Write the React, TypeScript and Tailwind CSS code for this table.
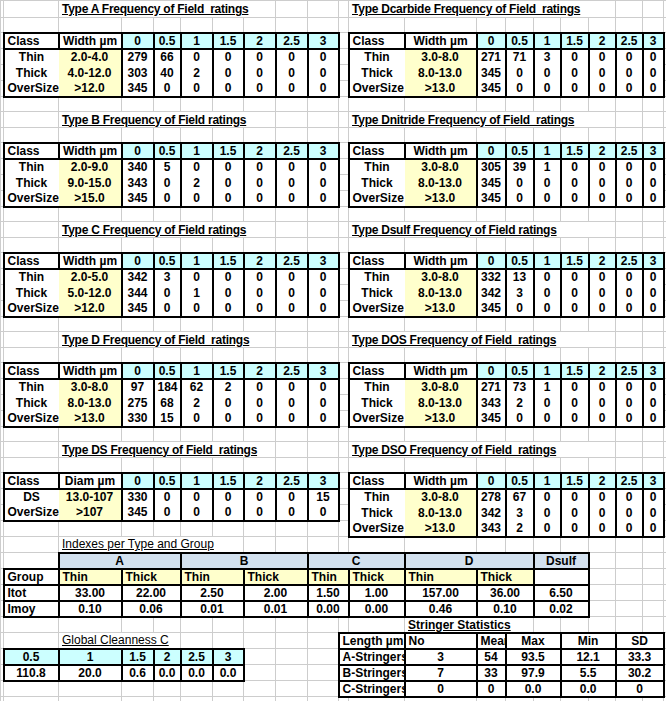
import React from 'react';

type Cell = { c: number; s?: number; t?: string; k?: string; b?: string; pre?: boolean };

const COLS = [
  'w-[3px]', 'w-[55px]', 'w-[63px]', 'w-[32px]', 'w-[27px]', 'w-[32px]', 'w-[31px]', 'w-[32px]', 'w-[32px]', 'w-[31px]',
  'w-[10px]', 'w-[56px]', 'w-[72px]', 'w-[29px]', 'w-[28px]', 'w-[27px]', 'w-[28px]', 'w-[27px]', 'w-[27px]', 'w-[21px]', 'w-[3px]',
];
const NC = COLS.length;

const H: number[] = [17, 15, 16, 16, 16, 16];
for (let i = 0; i < 4; i++) H.push(15, 16, 15, 16, 16, 16, 16);
for (let i = 0; i < 11; i++) H.push(16);
const HC: Record<number, string> = { 15: 'h-[15px]', 16: 'h-[16px]', 17: 'h-[17px]' };

const BT: Record<string, string> = { g: 'border-t border-t-[#cdcdcd]', K: 'border-t-2 border-t-black', k: 'border-t border-t-black', '0': 'border-t-0' };
const BR: Record<string, string> = { g: 'border-r border-r-[#cdcdcd]', K: 'border-r-2 border-r-black', k: 'border-r border-r-black', '0': 'border-r-0' };
const BB: Record<string, string> = { g: 'border-b border-b-[#cdcdcd]', K: 'border-b-2 border-b-black', k: 'border-b border-b-black', '0': 'border-b-0' };
const BL: Record<string, string> = { g: 'border-l border-l-[#cdcdcd]', K: 'border-l-2 border-l-black', k: 'border-l border-l-black', '0': 'border-l-0' };

const CYAN = 'bg-[#ccffff]';
const YEL = 'bg-[#ffffcc]';
const BLUE = 'bg-[#d3e1ef]';

const R: Cell[][] = H.map(() => []);

const titles: [number, string, string][] = [
  [0, 'Type A Frequency of Field  ratings', 'Type Dcarbide Frequency of Field  ratings'],
  [7, 'Type B Frequency of Field ratings', 'Type Dnitride Frequency of Field  ratings'],
  [14, 'Type C Frequency of Field ratings', 'Type Dsulf Frequency of Field ratings'],
  [21, 'Type D Frequency of Field  ratings', 'Type DOS Frequency of Field  ratings'],
  [28, 'Type DS Frequency of Field  ratings', 'Type DSO Frequency of Field  ratings'],
];
titles.forEach(([r, l, rt]) => {
  R[r].push({ c: 2, s: 6, t: l, k: 'text-left underline tracking-[-0.25px]', b: 'gggg', pre: true });
  R[r].push({ c: 11, s: 7, t: rt, k: 'text-left underline tracking-[-0.25px]', b: 'gggg', pre: true });
});

type FRow = [string, string, (number | string)[]];

function freq(row: number, side: 'L' | 'R', label: string, data: FRow[]) {
  const cc = side === 'L' ? 1 : 11;
  const wc = cc + 1;
  const vs = cc + 2;
  R[row].push({ c: cc, t: 'Class', k: 'text-left', b: 'KKKK' });
  R[row].push({ c: wc, t: label, k: 'text-center', b: 'KKKK' });
  ['0', '0.5', '1', '1.5', '2', '2.5', '3'].forEach((v, i) =>
    R[row].push({ c: vs + i, t: v, k: `text-center ${CYAN}`, b: 'KKKK' })
  );
  data.forEach(([cl, w, vals], j) => {
    const last = j === data.length - 1;
    const bt = last ? 'K' : '0';
    const r = row + 1 + j;
    R[r].push({ c: cc, t: cl, k: 'text-center', b: '00' + bt + 'K' });
    R[r].push({ c: wc, t: w, k: `text-center ${YEL}`, b: '0K' + bt + '0' });
    vals.forEach((v, i) => R[r].push({ c: vs + i, t: String(v), k: 'text-center', b: '0K' + bt + 'K' }));
  });
}

freq(2, 'L', 'Width µm', [
  ['Thin', '2.0-4.0', [279, 66, 0, 0, 0, 0, 0]],
  ['Thick', '4.0-12.0', [303, 40, 2, 0, 0, 0, 0]],
  ['OverSize', '>12.0', [345, 0, 0, 0, 0, 0, 0]],
]);
freq(2, 'R', 'Width µm', [
  ['Thin', '3.0-8.0', [271, 71, 3, 0, 0, 0, 0]],
  ['Thick', '8.0-13.0', [345, 0, 0, 0, 0, 0, 0]],
  ['OverSize', '>13.0', [345, 0, 0, 0, 0, 0, 0]],
]);
freq(9, 'L', 'Width µm', [
  ['Thin', '2.0-9.0', [340, 5, 0, 0, 0, 0, 0]],
  ['Thick', '9.0-15.0', [343, 0, 2, 0, 0, 0, 0]],
  ['OverSize', '>15.0', [345, 0, 0, 0, 0, 0, 0]],
]);
freq(9, 'R', 'Width µm', [
  ['Thin', '3.0-8.0', [305, 39, 1, 0, 0, 0, 0]],
  ['Thick', '8.0-13.0', [345, 0, 0, 0, 0, 0, 0]],
  ['OverSize', '>13.0', [345, 0, 0, 0, 0, 0, 0]],
]);
freq(16, 'L', 'Width µm', [
  ['Thin', '2.0-5.0', [342, 3, 0, 0, 0, 0, 0]],
  ['Thick', '5.0-12.0', [344, 0, 1, 0, 0, 0, 0]],
  ['OverSize', '>12.0', [345, 0, 0, 0, 0, 0, 0]],
]);
freq(16, 'R', 'Width µm', [
  ['Thin', '3.0-8.0', [332, 13, 0, 0, 0, 0, 0]],
  ['Thick', '8.0-13.0', [342, 3, 0, 0, 0, 0, 0]],
  ['OverSize', '>13.0', [345, 0, 0, 0, 0, 0, 0]],
]);
freq(23, 'L', 'Width µm', [
  ['Thin', '3.0-8.0', [97, 184, 62, 2, 0, 0, 0]],
  ['Thick', '8.0-13.0', [275, 68, 2, 0, 0, 0, 0]],
  ['OverSize', '>13.0', [330, 15, 0, 0, 0, 0, 0]],
]);
freq(23, 'R', 'Width µm', [
  ['Thin', '3.0-8.0', [271, 73, 1, 0, 0, 0, 0]],
  ['Thick', '8.0-13.0', [343, 2, 0, 0, 0, 0, 0]],
  ['OverSize', '>13.0', [345, 0, 0, 0, 0, 0, 0]],
]);
freq(30, 'L', 'Diam µm', [
  ['DS', '13.0-107', [330, 0, 0, 0, 0, 0, 15]],
  ['OverSize', '>107', [345, 0, 0, 0, 0, 0, 0]],
]);
freq(30, 'R', 'Width µm', [
  ['Thin', '3.0-8.0', [278, 67, 0, 0, 0, 0, 0]],
  ['Thick', '8.0-13.0', [342, 3, 0, 0, 0, 0, 0]],
  ['OverSize', '>13.0', [343, 2, 0, 0, 0, 0, 0]],
]);

// Indexes per Type and Group
R[34].push({ c: 2, s: 5, t: 'Indexes per Type and Group', k: 'text-left underline font-normal', b: 'gggg' });
[[2, 3, 'A'], [5, 4, 'B'], [9, 3, 'C'], [12, 3, 'D'], [15, 2, 'Dsulf']].forEach(([c, s, t]) =>
  R[35].push({ c: c as number, s: s as number, t: t as string, k: `text-center ${BLUE}`, b: 'KKKK' })
);
const ISP: [number, number][] = [[2, 1], [3, 2], [5, 2], [7, 2], [9, 2], [11, 1], [12, 1], [13, 2], [15, 2]];
R[36].push({ c: 1, t: 'Group', k: 'text-left', b: 'KKKK' });
['Thin', 'Thick', 'Thin', 'Thick', 'Thin', 'Thick', 'Thin', 'Thick', ''].forEach((t, i) =>
  R[36].push({ c: ISP[i][0], s: ISP[i][1], t, k: `text-left ${t ? YEL : ''}`, b: 'KKKK' })
);
R[37].push({ c: 1, t: 'Itot', k: 'text-left', b: 'KKKK' });
['33.00', '22.00', '2.50', '2.00', '1.50', '1.00', '157.00', '36.00', '6.50'].forEach((t, i) =>
  R[37].push({ c: ISP[i][0], s: ISP[i][1], t, k: 'text-center', b: 'KKKK' })
);
R[38].push({ c: 1, t: 'Imoy', k: 'text-left', b: 'KKKK' });
['0.10', '0.06', '0.01', '0.01', '0.00', '0.00', '0.46', '0.10', '0.02'].forEach((t, i) =>
  R[38].push({ c: ISP[i][0], s: ISP[i][1], t, k: 'text-center', b: 'KKKK' })
);

// Stringer statistics
R[39].push({ c: 12, s: 3, t: 'Stringer Statistics', k: 'text-left underline', b: 'gggg' });
const SSP: [number, number, string][] = [[10, 2, 'text-left'], [12, 1, 'text-left'], [13, 1, 'text-left'], [14, 2, 'text-center'], [16, 2, 'text-center'], [18, 2, 'text-center']];
const strRows: [number, string[]][] = [
  [40, ['Length µm', 'No', 'Mean', 'Max', 'Min', 'SD']],
  [41, ['A-Stringers', '3', '54', '93.5', '12.1', '33.3']],
  [42, ['B-Stringers', '7', '33', '97.9', '5.5', '30.2']],
  [43, ['C-Stringers', '0', '0', '0.0', '0.0', '0']],
];
strRows.forEach(([r, vals]) =>
  vals.forEach((t, i) => {
    const al = r === 40 ? SSP[i][2] : i === 0 ? 'text-left' : 'text-center';
    R[r].push({ c: SSP[i][0], s: SSP[i][1], t, k: al, b: 'KKKK' });
  })
);

// Global cleanness
R[40].push({ c: 2, s: 3, t: 'Global Cleanness C', k: 'text-left underline font-normal', b: 'gggg' });
['0.5', '1', '1.5', '2', '2.5', '3'].forEach((t, i) => R[41].push({ c: 1 + i, t, k: `text-center ${CYAN}`, b: 'KKKK' }));
['110.8', '20.0', '0.6', '0.0', '0.0', '0.0'].forEach((t, i) => R[42].push({ c: 1 + i, t, k: 'text-center', b: 'KKKK' }));

function renderRow(cells: Cell[]) {
  const map = new Map<number, Cell>();
  cells.forEach((c) => map.set(c.c, c));
  const out: React.ReactNode[] = [];
  let col = 0;
  while (col < NC) {
    const cell = map.get(col);
    if (cell) {
      const b = cell.b || 'gggg';
      const s = cell.s || 1;
      out.push(
        <td
          key={col}
          colSpan={s}
          className={`p-0 align-middle leading-[14px] ${BT[b[0]]} ${BR[b[1]]} ${BB[b[2]]} ${BL[b[3]]} ${cell.k || ''}`}
        >
          <div className={`overflow-hidden px-[3px] ${cell.pre ? 'whitespace-pre' : 'whitespace-nowrap'}`}>{cell.t}</div>
        </td>
      );
      col += s;
    } else {
      out.push(<td key={col} className={`p-0 ${BT.g} ${BR.g} ${BB.g} ${BL.g}`} />);
      col += 1;
    }
  }
  return out;
}

export default function App() {
  return (
    <div className="w-[666px] h-[701px] overflow-hidden bg-white">
      <table className="table-fixed border-collapse w-[666px] font-['Liberation_Sans',Arial,sans-serif] text-[12px] font-bold text-black">
        <colgroup>
          {COLS.map((w, i) => (
            <col key={i} className={w} />
          ))}
        </colgroup>
        <tbody>
          {R.map((cells, ri) => (
            <tr key={ri} className={HC[H[ri]]}>
              {renderRow(cells)}
            </tr>
          ))}
        </tbody>
      </table>
    </div>
  );
}
